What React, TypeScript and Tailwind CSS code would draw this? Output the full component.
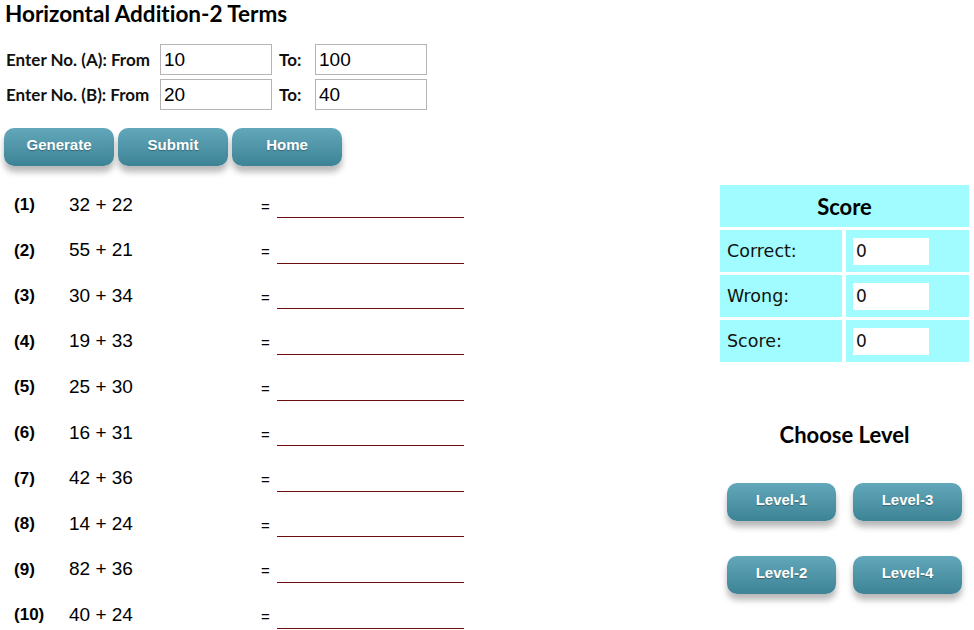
const problems = [
  [32, 22],
  [55, 21],
  [30, 34],
  [19, 33],
  [25, 30],
  [16, 31],
  [42, 36],
  [14, 24],
  [82, 36],
  [40, 24],
];

const btn =
  "h-[38px] rounded-[10px] bg-gradient-to-b from-[#62a8ba] to-[#3d8396] text-white font-bold text-[15px] pb-[4px] shadow-[0_6px_6px_rgba(0,0,0,0.28)] [text-shadow:0_1px_1px_rgba(0,0,0,0.3)] [font-family:'Liberation_Sans',Arial,sans-serif]";

function RangeRow({ label, from, to }: { label: string; from: string; to: string }) {
  return (
    <div className="flex items-center h-[31px]">
      <span className="w-[154px] text-[17px] font-bold text-[#111]">{label}</span>
      <input
        defaultValue={from}
        className="w-[112px] h-[31px] border border-[#b4b4b4] px-[3px] text-[19px] [font-family:'Liberation_Sans',Arial,sans-serif] outline-none"
      />
      <span className="w-[43px] pl-[7px] text-[17px] font-bold text-[#111]">To:</span>
      <input
        defaultValue={to}
        className="w-[112px] h-[31px] border border-[#b4b4b4] px-[3px] text-[19px] [font-family:'Liberation_Sans',Arial,sans-serif] outline-none"
      />
    </div>
  );
}

function ScoreRow({ label }: { label: string }) {
  return (
    <div className="flex gap-[4px] h-[42px]">
      <div className="w-[122px] bg-[#a0fcfe] flex items-center pl-[7px] text-[17.5px] text-[#111] [font-family:'DejaVu_Sans',Verdana,sans-serif]">
        {label}
      </div>
      <div className="w-[123px] bg-[#a0fcfe] flex items-center pl-[7px]">
        <input
          defaultValue="0"
          className="w-[76px] h-[27px] bg-white px-[3px] text-[17px] text-[#111] [font-family:'DejaVu_Sans',Verdana,sans-serif] outline-none"
        />
      </div>
    </div>
  );
}

export default function App() {
  return (
    <div className="w-[974px] h-[630px] overflow-hidden bg-white text-black [font-variant-ligatures:none] [font-family:Lato,'Open_Sans',sans-serif]">
      <h1 className="pl-[5px] pt-[1px] text-[22.5px] font-bold leading-[26px]">Horizontal Addition-2 Terms</h1>

      <div className="mt-[17px] pl-[6px] flex flex-col gap-[4px]">
        <RangeRow label="Enter No. (A): From" from="10" to="100" />
        <RangeRow label="Enter No. (B): From" from="20" to="40" />
      </div>

      <div className="mt-[18px] pl-[4px] flex gap-[4px]">
        <button className={btn + " w-[110px]"}>Generate</button>
        <button className={btn + " w-[110px]"}>Submit</button>
        <button className={btn + " w-[110px]"}>Home</button>
      </div>

      <div className="mt-[16px] flex">
        {/* problems */}
        <div className="w-[720px]">
          {problems.map(([a, b], i) => (
            <div key={i} className="h-[45.6px] flex items-center">
              <span className="w-[69px] pl-[14px] text-[17px] font-bold [font-family:'Liberation_Sans',Arial,sans-serif]">
                ({i + 1})
              </span>
              <span className="w-[192px] text-[19px] [font-family:'Liberation_Sans',Arial,sans-serif]">
                {a} + {b}
              </span>
              <span className="w-[16px] text-[15px] mt-[4px] [font-family:'Liberation_Sans',Arial,sans-serif]">=</span>
              <span className="w-[187px] h-[21px] mt-[6px] border-b border-[#6e0f0f]" />
            </div>
          ))}
        </div>

        {/* score + levels */}
        <div className="w-[249px] pt-[3px]">
          <div className="flex flex-col gap-[3px]">
            <div className="h-[42px] bg-[#a0fcfe] flex items-center justify-center text-[22px] font-bold">Score</div>
            <ScoreRow label="Correct:" />
            <ScoreRow label="Wrong:" />
            <ScoreRow label="Score:" />
          </div>

          <div className="mt-[60px] text-center text-[22px] font-bold leading-[26px]">Choose Level</div>

          <div className="mt-[35px] pl-[7px] grid grid-cols-[109px_109px] gap-x-[17px] gap-y-[35px]">
            <button className={btn}>Level-1</button>
            <button className={btn}>Level-3</button>
            <button className={btn}>Level-2</button>
            <button className={btn}>Level-4</button>
          </div>
        </div>
      </div>
    </div>
  );
}
